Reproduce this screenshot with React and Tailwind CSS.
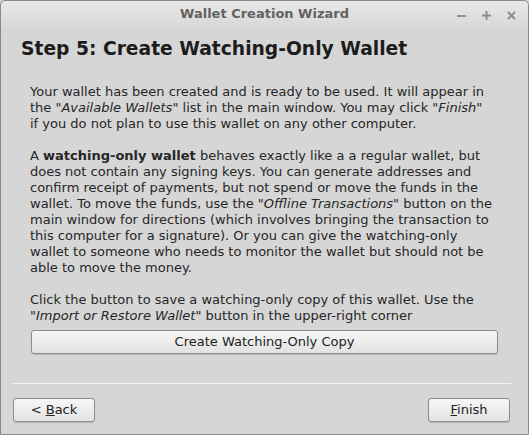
import React from 'react';

const font = { fontFamily: '"DejaVu Sans", Verdana, sans-serif' };

function WinButton({ children, className = '' }) {
  return (
    <button
      className={
        'h-[24px] rounded-[3px] border border-[#8c8c8c] bg-gradient-to-b from-[#f7f7f7] to-[#e2e2e2] text-[13px] text-[#222] shadow-[0_1px_1px_rgba(0,0,0,0.15)] ' +
        className
      }
    >
      {children}
    </button>
  );
}

export default function App() {
  return (
    <div className="w-[529px] h-[435px] bg-[#d6d6d6]" style={font}>
      <div className="flex h-full flex-col rounded-t-[5px] border border-[#8a8a8a] bg-[#d6d6d6]">
        {/* title bar */}
        <div className="relative flex h-[26px] items-center justify-center rounded-t-[5px] bg-gradient-to-b from-[#e9e9e9] to-[#d8d8d8]">
          <span className="text-[13px] font-bold text-[#626262]">Wallet Creation Wizard</span>
          <div className="absolute right-[12px] top-[10px] flex items-center gap-[16px] text-[#8f8f8f]">
            <svg width="9" height="9" viewBox="0 0 9 9">
              <rect x="0" y="4" width="9" height="2" fill="currentColor" />
            </svg>
            <svg width="9" height="9" viewBox="0 0 9 9">
              <rect x="0" y="3.5" width="9" height="2" fill="currentColor" />
              <rect x="3.5" y="0" width="2" height="9" fill="currentColor" />
            </svg>
            <svg width="9" height="9" viewBox="0 0 9 9">
              <path d="M1 1 L8 8 M8 1 L1 8" stroke="currentColor" strokeWidth="2" />
            </svg>
          </div>
        </div>

        {/* content */}
        <div className="flex flex-1 flex-col px-[20px]">
          <h1 className="mt-[10px] text-[18.7px] font-bold leading-[24px] text-[#1c1c1c]">
            Step 5: Create Watching-Only Wallet
          </h1>

          <div className="mt-[23px] pl-[9px] text-[13px] leading-[16px] text-[#262626] whitespace-nowrap">
            <p>
              Your wallet has been created and is ready to be used. It will appear in
              <br />
              the "<i>Available Wallets</i>" list in the main window. You may click "<i>Finish</i>"
              <br />
              if you do not plan to use this wallet on any other computer.
            </p>
            <p className="mt-[16px]">
              A <b>watching-only wallet</b> behaves exactly like a a regular wallet, but
              <br />
              does not contain any signing keys. You can generate addresses and
              <br />
              confirm receipt of payments, but not spend or move the funds in the
              <br />
              wallet. To move the funds, use the "<i>Offline Transactions</i>" button on the
              <br />
              main window for directions (which involves bringing the transaction to
              <br />
              this computer for a signature). Or you can give the watching-only
              <br />
              wallet to someone who needs to monitor the wallet but should not be
              <br />
              able to move the money.
            </p>
            <p className="mt-[16px]">
              Click the button to save a watching-only copy of this wallet. Use the
              <br />
              "<i>Import or Restore Wallet</i>" button in the upper-right corner
            </p>
          </div>

          <div className="mt-[5px] pl-[10px] pr-[10px]">
            <WinButton className="w-full">Create Watching-Only Copy</WinButton>
          </div>
        </div>

        {/* footer */}
        <div className="ml-[11px] mr-[17px] h-px bg-[#f2f2f2]" />
        <div className="flex justify-between pl-[12px] pr-[18px] pt-[14px] pb-[12px]">
          <WinButton className="w-[82px]">
            &lt; <span className="underline">B</span>ack
          </WinButton>
          <WinButton className="w-[82px]">
            <span className="underline">F</span>inish
          </WinButton>
        </div>
      </div>
    </div>
  );
}
